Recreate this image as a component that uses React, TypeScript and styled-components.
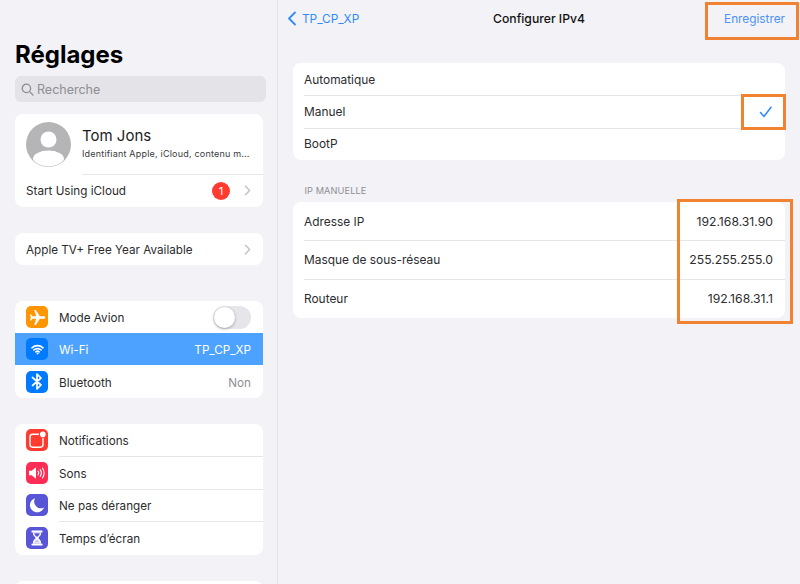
import React from 'react'
import styled, { createGlobalStyle } from 'styled-components'

const GlobalStyle = createGlobalStyle`
  html, body { margin: 0; padding: 0; background: #f2f2f7; }
  body { font-family: Inter, "Liberation Sans", sans-serif; color: #1c1c1e; }
`

const Page = styled.div`
  display: flex;
  width: 800px;
  height: 584px;
  overflow: hidden;
  background: #f2f2f7;
`

const Sidebar = styled.aside`
  width: 278px;
  flex: none;
  box-sizing: border-box;
  padding: 40px 15px 0;
  border-right: 1px solid #e4e4e9;
`

const Title = styled.h1`
  margin: 0 0 6px;
  font-size: 24px;
  line-height: 30px;
  font-weight: 700;
  color: #000;
`

const SearchBar = styled.div`
  display: flex;
  align-items: center;
  gap: 3px;
  width: 251px;
  height: 26px;
  box-sizing: border-box;
  padding-left: 6px;
  margin-bottom: 12px;
  border-radius: 6px;
  background: #e3e3e8;
  color: #8e8e93;
  font-size: 12.5px;
`

const RowLabel = styled.span`
  flex: 1;
  white-space: nowrap;
`

const RowValue = styled.span<{ $active?: boolean }>`
  color: ${p => (p.$active ? '#fff' : '#8e8e93')};
`

const Card = styled.div<{ $gap?: number }>`
  width: 248px;
  background: #fff;
  border-radius: 8px;
  overflow: hidden;
  margin-bottom: ${p => p.$gap ?? 26}px;
  ${RowLabel}, ${RowValue} {
    padding-top: 2px;
  }
`

const ProfileCard = styled(Card)`
  ${RowLabel} {
    padding-top: 0;
  }
`

const Profile = styled.div`
  display: flex;
  align-items: center;
  gap: 11px;
  height: 60px;
  padding: 0 12px 0 11px;
  box-sizing: border-box;
`

const ProfileText = styled.div`
  flex: 1;
  min-width: 0;
  margin-top: -3px;
`

const ProfileName = styled.div`
  padding-top: 1px;
  font-size: 15px;
  line-height: 20px;
`

const ProfileSub = styled.div`
  margin-top: 2px;
  font-size: 9px;
  line-height: 12px;
  letter-spacing: 0.2px;
  white-space: nowrap;
  color: #3a3a3c;
`

const Row = styled.div<{ $h?: number; $inset?: number; $active?: boolean; $first?: boolean }>`
  position: relative;
  display: flex;
  align-items: center;
  height: ${p => p.$h ?? 32}px;
  box-sizing: border-box;
  padding: 0 12px 0 11px;
  font-size: 11.7px;
  color: ${p => (p.$active ? '#fff' : '#2c2c2e')};
  background: ${p => (p.$active ? '#4da2ff' : 'transparent')};
  ${p =>
    !p.$first &&
    !p.$active &&
    `&::before {
      content: '';
      position: absolute;
      top: 0;
      left: ${p.$inset ?? 11}px;
      right: 0;
      height: 1px;
      background: #e5e5ea;
    }`}
`

const IconTile = styled.span<{ $bg: string }>`
  display: flex;
  align-items: center;
  justify-content: center;
  width: 22px;
  height: 22px;
  flex: none;
  margin-right: 11px;
  border-radius: 5px;
  background: ${p => p.$bg};
`

const Badge = styled.span`
  display: flex;
  align-items: center;
  justify-content: center;
  width: 18px;
  height: 18px;
  margin-right: 14px;
  border-radius: 50%;
  background: #ff3b30;
  color: #fff;
  font-size: 11px;
`

const Toggle = styled.span`
  position: relative;
  display: block;
  width: 38px;
  height: 23px;
  border-radius: 12px;
  background: #e5e5ea;
  &::after {
    content: '';
    position: absolute;
    top: 1px;
    left: 1px;
    width: 21px;
    height: 21px;
    border-radius: 50%;
    background: #fff;
    box-shadow: 0 1px 3px rgba(0, 0, 0, 0.3);
  }
`

const Detail = styled.main`
  position: relative;
  flex: 1;
  padding: 0 15px;
`

const NavBar = styled.header`
  display: grid;
  grid-template-columns: 1fr auto 1fr;
  align-items: center;
  height: 37px;
  margin-bottom: 26px;
  font-size: 11.8px;
`

const BackLink = styled.span`
  display: flex;
  align-items: center;
  gap: 5px;
  margin-left: -6px;
  color: #2f8bfb;
`

const NavTitle = styled.span`
  font-size: 12.2px;
  font-weight: 500;
  color: #111;
`

const SaveLink = styled.span`
  justify-self: end;
  color: #4c93f5;
`

const DetailCard = styled.div<{ $gap?: number }>`
  width: 492px;
  background: #fff;
  border-radius: 8px;
  overflow: hidden;
  margin-bottom: ${p => p.$gap ?? 0}px;
  ${Row} {
    font-size: 11.9px;
  }
`

const SectionLabel = styled.div`
  margin: 0 0 5px 11.5px;
  font-size: 9.2px;
  line-height: 12px;
  letter-spacing: 0.1px;
  color: #8e8e93;
`

const IpValue = styled.span`
  font-size: 12.2px;
  color: #2c2c2e;
`

// orange annotation boxes drawn on top of the screenshot
const Marker = styled.div<{ $x: number; $y: number; $w: number; $h: number }>`
  position: absolute;
  left: ${p => p.$x}px;
  top: ${p => p.$y}px;
  width: ${p => p.$w}px;
  height: ${p => p.$h}px;
  box-sizing: border-box;
  border: 3px solid #f08232;
`

const Chevron = () => (
  <svg width="7" height="11" viewBox="0 0 7 11" fill="none" stroke="#c0c0c5" strokeWidth="1.4" strokeLinecap="round" strokeLinejoin="round">
    <path d="M1.5 1.2 L5.6 5.5 L1.5 9.8" />
  </svg>
)

const Avatar = () => (
  <svg width="45" height="45" viewBox="0 0 45 45">
    <defs>
      <clipPath id="avatar-clip">
        <circle cx="22.5" cy="22.5" r="22" />
      </clipPath>
    </defs>
    <circle cx="22.5" cy="22.5" r="22.5" fill="#b5b5b8" />
    <g clipPath="url(#avatar-clip)" fill="#fff">
      <circle cx="22.5" cy="17.5" r="8" />
      <ellipse cx="22.5" cy="37" rx="15.5" ry="8.5" />
    </g>
  </svg>
)

const PlaneIcon = () => (
  <svg width="17" height="17" viewBox="0 0 24 24" fill="#fff">
    <path d="M23 12c0-1-1-1.8-2.4-1.8h-5.2L9.6 1.5H7.4l2.8 8.7H5L3.2 7.6H1.4L2.6 12 1.4 16.4h1.8L5 13.8h5.2l-2.8 8.7h2.2l5.8-8.7h5.2C22 13.8 23 13 23 12z" />
  </svg>
)

const WifiIcon = () => (
  <svg width="13" height="11" viewBox="0 0 16 13" fill="none" stroke="#fff" strokeWidth="2" strokeLinecap="round">
    <path d="M1.2 4.4C5 .9 11 .9 14.8 4.4" />
    <path d="M3.6 7C6 4.8 10 4.8 12.4 7" />
    <path d="M6 9.5c1.1-1 2.9-1 4 0" />
    <circle cx="8" cy="11.5" r="0.7" fill="#fff" strokeWidth="1" />
  </svg>
)

const BluetoothIcon = () => (
  <svg width="12" height="17" viewBox="0 0 12 17" fill="none" stroke="#fff" strokeWidth="1.7" strokeLinejoin="round" strokeLinecap="round">
    <path d="M1.5 4.5 L10 12 L6 15.8 V1.2 L10 5 L1.5 12.5" />
  </svg>
)

const NotificationIcon = () => (
  <svg width="20" height="20" viewBox="0 0 20 20" fill="none">
    <rect x="3" y="4.2" width="13" height="13" rx="2.6" stroke="#fff" strokeWidth="1.4" />
    <circle cx="15.8" cy="4.4" r="3.8" fill="#ff3b30" />
    <circle cx="15.8" cy="4.4" r="2.8" fill="#fff" />
  </svg>
)

const SoundIcon = () => (
  <svg width="18" height="14" viewBox="0 0 18 14" fill="none">
    <path d="M1 4.8h2.6L8 1.2v11.6L3.6 9.2H1z" fill="#fff" />
    <path d="M10 5.2c.8 1 .8 2.6 0 3.6M12.2 3.6c1.4 2 1.4 4.8 0 6.8M14.5 2c2 3 2 7 0 10" stroke="#fff" strokeWidth="1.1" strokeLinecap="round" />
  </svg>
)

const MoonIcon = () => (
  <svg width="16" height="16" viewBox="0 0 16 16" fill="#fff">
    <path d="M6.2 1.2A7.2 7.2 0 1 0 15 10.4 6.6 6.6 0 0 1 6.2 1.2z" />
  </svg>
)

const HourglassIcon = () => (
  <svg width="12" height="16" viewBox="0 0 12 16" fill="#fff">
    <rect x="0.5" y="0.5" width="11" height="2" rx="0.6" />
    <rect x="0.5" y="13.5" width="11" height="2" rx="0.6" />
    <path d="M2 2.5h8v1.6C10 6 7.4 7 7.4 8S10 10 10 11.9v1.6H2v-1.6C2 10 4.6 9 4.6 8S2 6 2 4.1z" />
    <path d="M3.4 3.2h5.2v.9c0 1.2-1.6 2-2.6 3-1-1-2.6-1.8-2.6-3z" fill="#5856d6" />
    <path d="M6 9.6c-1 .8-2.4 1.6-2.6 3h5.2C8.4 11.2 7 10.4 6 9.6z" fill="#5856d6" opacity="0.35" />
  </svg>
)

const App: React.FC = () => {
  return (
    <Page>
      <GlobalStyle />
      <Sidebar>
        <Title>Réglages</Title>
        <SearchBar>
          <svg width="13" height="13" viewBox="0 0 13 13" fill="none" stroke="#8e8e93" strokeWidth="1.3" strokeLinecap="round">
            <circle cx="5.4" cy="5.4" r="4.2" />
            <path d="M8.6 8.6 L12 12" />
          </svg>
          Recherche
        </SearchBar>

        <ProfileCard>
          <Profile>
            <Avatar />
            <ProfileText>
              <ProfileName>Tom Jons</ProfileName>
              <ProfileSub>Identifiant Apple, iCloud, contenu m...</ProfileSub>
            </ProfileText>
          </Profile>
          <Row $h={33} $inset={67}>
            <RowLabel>Start Using iCloud</RowLabel>
            <Badge>1</Badge>
            <Chevron />
          </Row>
        </ProfileCard>

        <Card $gap={36}>
          <Row $first>
            <RowLabel>Apple TV+ Free Year Available</RowLabel>
            <Chevron />
          </Row>
        </Card>

        <Card>
          <Row $first>
            <IconTile $bg="#ff9500"><PlaneIcon /></IconTile>
            <RowLabel>Mode Avion</RowLabel>
            <Toggle />
          </Row>
          <Row $active>
            <IconTile $bg="#007aff"><WifiIcon /></IconTile>
            <RowLabel>Wi-Fi</RowLabel>
            <RowValue $active>TP_CP_XP</RowValue>
          </Row>
          <Row $first $h={33}>
            <IconTile $bg="#007aff"><BluetoothIcon /></IconTile>
            <RowLabel>Bluetooth</RowLabel>
            <RowValue>Non</RowValue>
          </Row>
        </Card>

        <Card>
          <Row $first>
            <IconTile $bg="#ff3b30"><NotificationIcon /></IconTile>
            <RowLabel>Notifications</RowLabel>
          </Row>
          <Row $inset={44} $h={33}>
            <IconTile $bg="#ff2d55"><SoundIcon /></IconTile>
            <RowLabel>Sons</RowLabel>
          </Row>
          <Row $inset={44}>
            <IconTile $bg="#5856d6"><MoonIcon /></IconTile>
            <RowLabel>Ne pas déranger</RowLabel>
          </Row>
          <Row $inset={44} $h={34}>
            <IconTile $bg="#5856d6"><HourglassIcon /></IconTile>
            <RowLabel>Temps d’écran</RowLabel>
          </Row>
        </Card>

        <Card>
          <Row $first />
        </Card>
      </Sidebar>

      <Detail>
        <NavBar>
          <BackLink>
            <svg width="10" height="15" viewBox="0 0 10 15" fill="none" stroke="#2f8bfb" strokeWidth="1.8" strokeLinecap="round" strokeLinejoin="round">
              <path d="M8 1.5 L2 7.5 L8 13.5" />
            </svg>
            TP_CP_XP
          </BackLink>
          <NavTitle>Configurer IPv4</NavTitle>
          <SaveLink>Enregistrer</SaveLink>
        </NavBar>

        <DetailCard $gap={25}>
          <Row $first $h={32.4}>
            <RowLabel>Automatique</RowLabel>
          </Row>
          <Row $h={32.4}>
            <RowLabel>Manuel</RowLabel>
            <svg width="14" height="12" viewBox="0 0 14 12" fill="none" stroke="#2f8bfb" strokeWidth="1.5" strokeLinecap="round" strokeLinejoin="round">
              <path d="M1.5 6.5 L5 10.5 L12 1.2" />
            </svg>
          </Row>
          <Row $h={32.2}>
            <RowLabel>BootP</RowLabel>
          </Row>
        </DetailCard>

        <SectionLabel>IP MANUELLE</SectionLabel>
        <DetailCard>
          <Row $h={38.4} $first>
            <RowLabel>Adresse IP</RowLabel>
            <IpValue>192.168.31.90</IpValue>
          </Row>
          <Row $h={39}>
            <RowLabel>Masque de sous-réseau</RowLabel>
            <IpValue>255.255.255.0</IpValue>
          </Row>
          <Row $h={38.7}>
            <RowLabel>Routeur</RowLabel>
            <IpValue>192.168.31.1</IpValue>
          </Row>
        </DetailCard>

        <Marker $x={427} $y={2} $w={94} $h={38} />
        <Marker $x={463} $y={94} $w={45} $h={36} />
        <Marker $x={399} $y={199} $w={116} $h={125} />
      </Detail>
    </Page>
  )
}

export default App
